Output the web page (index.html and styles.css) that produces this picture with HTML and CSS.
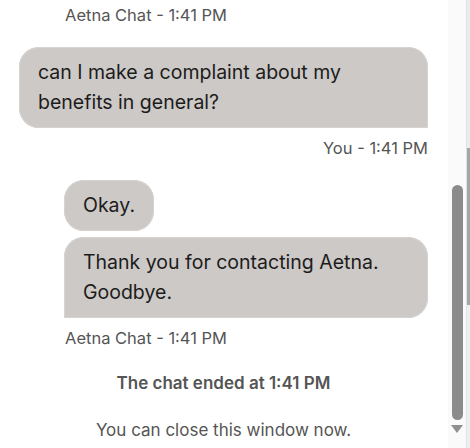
FILE: index.html
```html
<!DOCTYPE html>
<html lang="en">
<head>
  <meta charset="UTF-8" />
  <meta name="viewport" content="width=device-width, initial-scale=1" />
  <title>Aetna Chat</title>
  <link rel="stylesheet" href="styles.css">
</head>
<body>
<div class="chat-window">
  <main class="chat-log" aria-label="Chat transcript">
    <p class="msg-meta agent-meta">Aetna Chat - 1:41 PM</p>

    <div class="msg-group user-group">
      <div class="bubble user-bubble">can I make a complaint about my benefits in general?</div>
      <p class="msg-meta user-meta">You - 1:41 PM</p>
    </div>

    <div class="msg-group agent-group">
      <div class="bubble agent-bubble single">Okay.</div>
      <div class="bubble agent-bubble last">Thank you for contacting Aetna. Goodbye.</div>
      <p class="msg-meta agent-meta">Aetna Chat - 1:41 PM</p>
    </div>

    <p class="chat-status">The chat ended at 1:41 PM</p>
    <p class="chat-note">You can close this window now.</p>
  </main>
  <div class="scrollbar" aria-hidden="true">
    <div class="scroll-space"></div>
    <div class="scroll-thumb"></div>
    <div class="scroll-arrow"></div>
  </div>
  <div class="outer-edge" aria-hidden="true">
    <div class="edge-top"></div>
    <div class="edge-thumb"></div>
    <div class="edge-rest"></div>
  </div>
</div>
</body>
</html>
```

FILE: styles.css
```css
body {
  margin: 0;
  font-family: 'Inter', 'Liberation Sans', sans-serif;
  background: #ffffff;
  color: #1c1c1c;
  height: 448px;
  overflow: hidden;
}
.chat-window {
  display: flex;
  height: 448px;
}
.chat-log {
  flex: 1;
  display: flex;
  flex-direction: column;
  padding: 5px 20px 0 19px;
}
.msg-meta {
  margin: 0;
  font-size: 16.5px;
  line-height: 20px;
  color: #555555;
}
.agent-meta {
  padding-left: 46px;
}
.user-meta {
  text-align: right;
  margin-top: 10px;
}
.msg-group {
  display: flex;
  flex-direction: column;
}
.user-group {
  margin-top: 22px;
}
.agent-group {
  margin-top: 22px;
  padding-left: 45px;
}
.agent-group .agent-meta {
  padding-left: 1px;
  margin-top: 10px;
}
.bubble {
  background: #cdc9c6;
  box-shadow: inset 0 0 0 1px #d6d3d0;
  font-size: 19.5px;
  line-height: 30px;
  padding: 10px 19px 11px 19px;
  color: #1c1c1c;
}
.user-bubble {
  border-radius: 20px 20px 0 20px;
  padding-right: 40px;
}
.agent-bubble.single {
  align-self: flex-start;
  border-radius: 20px;
  margin-bottom: 6px;
}
.agent-bubble.last {
  border-radius: 20px 20px 20px 0;
  padding-right: 30px;
}
.chat-status {
  margin: 25px 0 0 0;
  text-align: center;
  font-size: 17px;
  line-height: 20px;
  font-weight: 600;
  color: #555555;
}
.chat-note {
  margin: 27px 0 0 0;
  text-align: center;
  font-size: 17px;
  line-height: 20px;
  color: #555555;
}
.scrollbar {
  width: 18px;
  background: #fafafa;
  display: flex;
  flex-direction: column;
  align-items: center;
}
.scroll-space {
  height: 185px;
}
.scroll-thumb {
  width: 11px;
  height: 235px;
  background: #8b8b8b;
  border-radius: 6px;
}
.scroll-arrow {
  margin-top: 5px;
  width: 0;
  height: 0;
  border-left: 6px solid transparent;
  border-right: 6px solid transparent;
  border-top: 8px solid #8f8f8f;
}
.outer-edge {
  width: 3px;
  display: flex;
  flex-direction: column;
  border-left: 1px solid #e2e2e2;
}
.edge-top {
  height: 148px;
  background: #ececec;
}
.edge-thumb {
  height: 157px;
  background: #a6a6a6;
}
.edge-rest {
  flex: 1;
  background: #efefef;
}
```
